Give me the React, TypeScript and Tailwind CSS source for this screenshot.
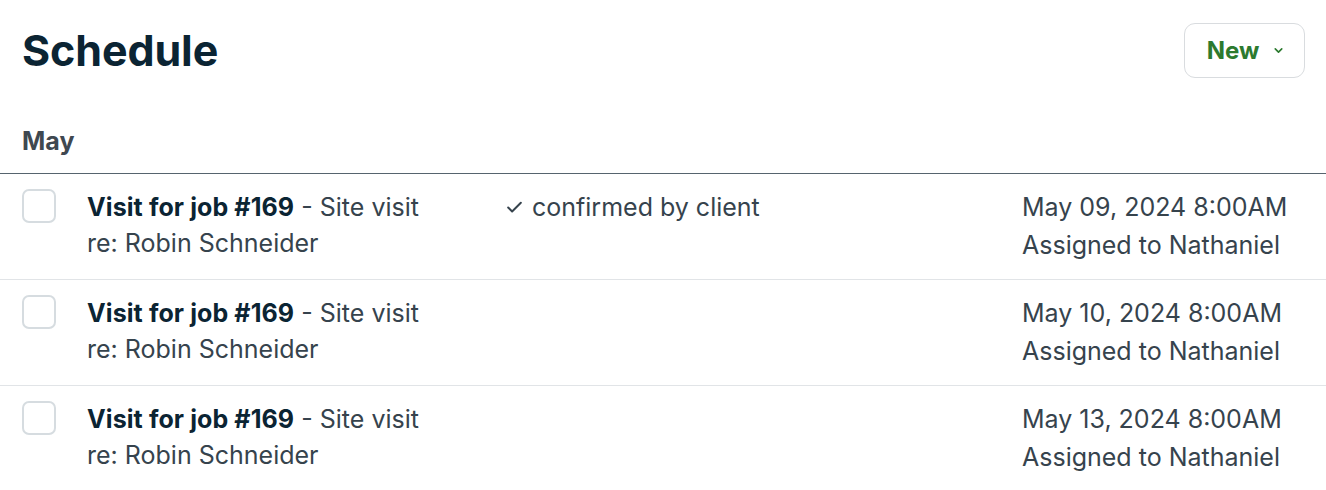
import { Check, ChevronDown } from "lucide-react";

const visits = [
  { date: "May 09, 2024 8:00AM", confirmed: true },
  { date: "May 10, 2024 8:00AM", confirmed: false },
  { date: "May 13, 2024 8:00AM", confirmed: false },
];

export default function App() {
  return (
    <div className="min-h-screen bg-white font-['Inter',sans-serif] text-[#36434d]">
      <div className="flex items-center justify-between pl-[22px] pr-[21px] pt-[22px]">
        <h1 className="text-[43px] font-bold leading-[57px] tracking-[-0.1px] text-[#0b2433]">Schedule</h1>
        <button className="flex h-[55px] w-[121px] items-center justify-center gap-[13px] rounded-[11px] border border-[#d9dcdf] bg-white pl-[3px]">
          <span className="text-[24px] font-bold leading-[30px] text-[#2c7a2f]">New</span>
          <ChevronDown className="h-[13px] w-[13px] text-[#2c7a2f]" strokeWidth={3} />
        </button>
      </div>

      <div className="border-b border-[#56646e] pl-[22px] pb-[17px] pt-[47px]">
        <h2 className="text-[25px] font-bold leading-[30px] text-[#3f4850]">May</h2>
      </div>

      <ul>
        {visits.map((v, i) => (
          <li
            key={v.date}
            className={`flex pl-[22px] pr-[21px] pt-[15px] pb-[16px] ${i < visits.length - 1 ? "border-b border-[#e1e4e7]" : ""}`}
          >
            <div className="h-[34px] w-[34px] shrink-0 rounded-[7px] border-2 border-[#d6dce0] bg-white" />
            <div className="ml-[31px] w-[418px] text-[25px] leading-[36px]">
              <div>
                <span className="font-bold tracking-[0.1px] text-[#0b2433]">Visit for job #169</span> - Site visit
              </div>
              <div>re: Robin Schneider</div>
            </div>
            <div className="flex-1 text-[25px] leading-[36px]">
              {v.confirmed && (
                <div className="flex items-center gap-[8px]">
                  <Check className="h-[19px] w-[19px] text-[#36434d]" strokeWidth={2.5} />
                  <span>confirmed by client</span>
                </div>
              )}
            </div>
            <div className="w-[283px] text-[25px] leading-[36px]">
              <div>{v.date}</div>
              <div className="mt-[2px]">Assigned to Nathaniel</div>
            </div>
          </li>
        ))}
      </ul>
    </div>
  );
}
